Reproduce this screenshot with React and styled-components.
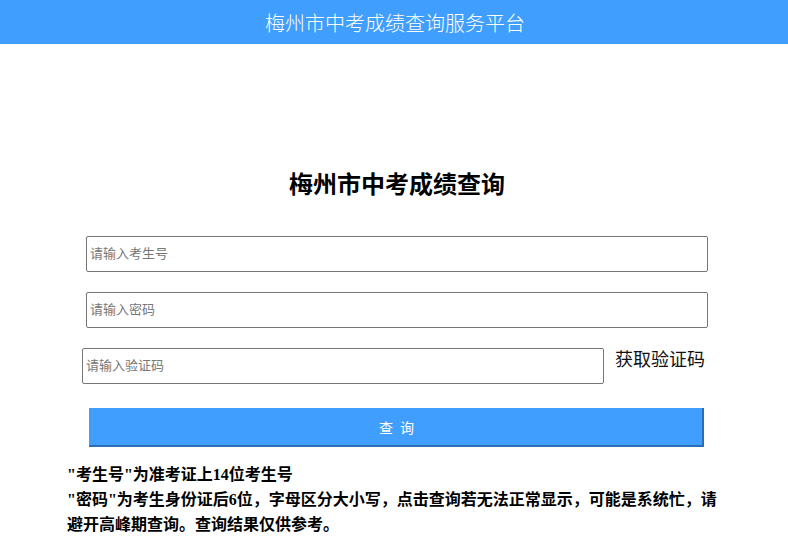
import React from 'react';
import styled, { createGlobalStyle } from 'styled-components';

const GlobalStyle = createGlobalStyle`
  body {
    margin: 0;
    background: #fff;
    font-family: "Noto Sans CJK SC", "Noto Sans", sans-serif;
  }
`;

const TopBar = styled.header`
  height: 44px;
  background: #409eff;
  color: #fff;
  display: flex;
  align-items: center;
  justify-content: center;
  font-size: 20px;
  font-weight: 300;
  padding-left: 2px;
`;

const Panel = styled.main`
  width: 660px;
  margin: 0 auto;
  padding-left: 3px;
  box-sizing: border-box;
`;

const Heading = styled.h1`
  margin: 123px 0 37px;
  font-size: 24px;
  line-height: 32px;
  font-weight: 700;
  text-align: center;
  color: #000;
  padding-left: 3px;
`;

const Field = styled.input`
  display: block;
  box-sizing: border-box;
  width: ${(p) => p.$width}px;
  height: 36px;
  margin: 0 0 20px ${(p) => p.$offset}px;
  padding: 0 3px 3px;
  border: 1px solid #767676;
  border-radius: 2px;
  font-family: "Noto Sans CJK SC", sans-serif;
  font-size: 13px;
  outline: none;
  &::placeholder {
    color: #777;
  }
`;

const CodeRow = styled.div`
  display: flex;
  align-items: flex-start;
  gap: 11px;
  margin-left: 15px;
  ${Field} {
    margin: 0;
  }
`;

const CodeLink = styled.span`
  font-size: 18px;
  line-height: 20px;
  color: #111;
  cursor: pointer;
`;

const QueryButton = styled.button`
  display: block;
  box-sizing: border-box;
  width: 615px;
  height: 39px;
  margin: 24px 0 0 22px;
  padding: 0 0 0 4px;
  background: #409eff;
  color: #fff;
  border: none;
  border-right: 2px solid #2c6db3;
  border-bottom: 2px solid #2c6db3;
  font-family: "Noto Sans CJK SC", sans-serif;
  font-size: 14px;
  letter-spacing: 2px;
  cursor: pointer;
`;

const Notes = styled.div`
  margin-top: 15px;
  font-family: "Liberation Serif", "Noto Sans CJK SC", serif;
  font-size: 16px;
  font-weight: 700;
  line-height: 25px;
  color: #000;
`;

const NoteLine = styled.p`
  margin: 0;
`;

const App = () => (
  <>
    <GlobalStyle />
    <TopBar>梅州市中考成绩查询服务平台</TopBar>
    <Panel>
      <Heading>梅州市中考成绩查询</Heading>
      <Field $width={622} $offset={19} placeholder="请输入考生号" />
      <Field $width={622} $offset={19} type="password" placeholder="请输入密码" />
      <CodeRow>
        <Field $width={522} $offset={0} placeholder="请输入验证码" />
        <CodeLink>获取验证码</CodeLink>
      </CodeRow>
      <QueryButton type="button">查 询</QueryButton>
      <Notes>
        <NoteLine>"考生号"为准考证上14位考生号</NoteLine>
        <NoteLine>"密码"为考生身份证后6位，字母区分大小写，点击查询若无法正常显示，可能是系统忙，请避开高峰期查询。查询结果仅供参考。</NoteLine>
      </Notes>
    </Panel>
  </>
);

export default App;
